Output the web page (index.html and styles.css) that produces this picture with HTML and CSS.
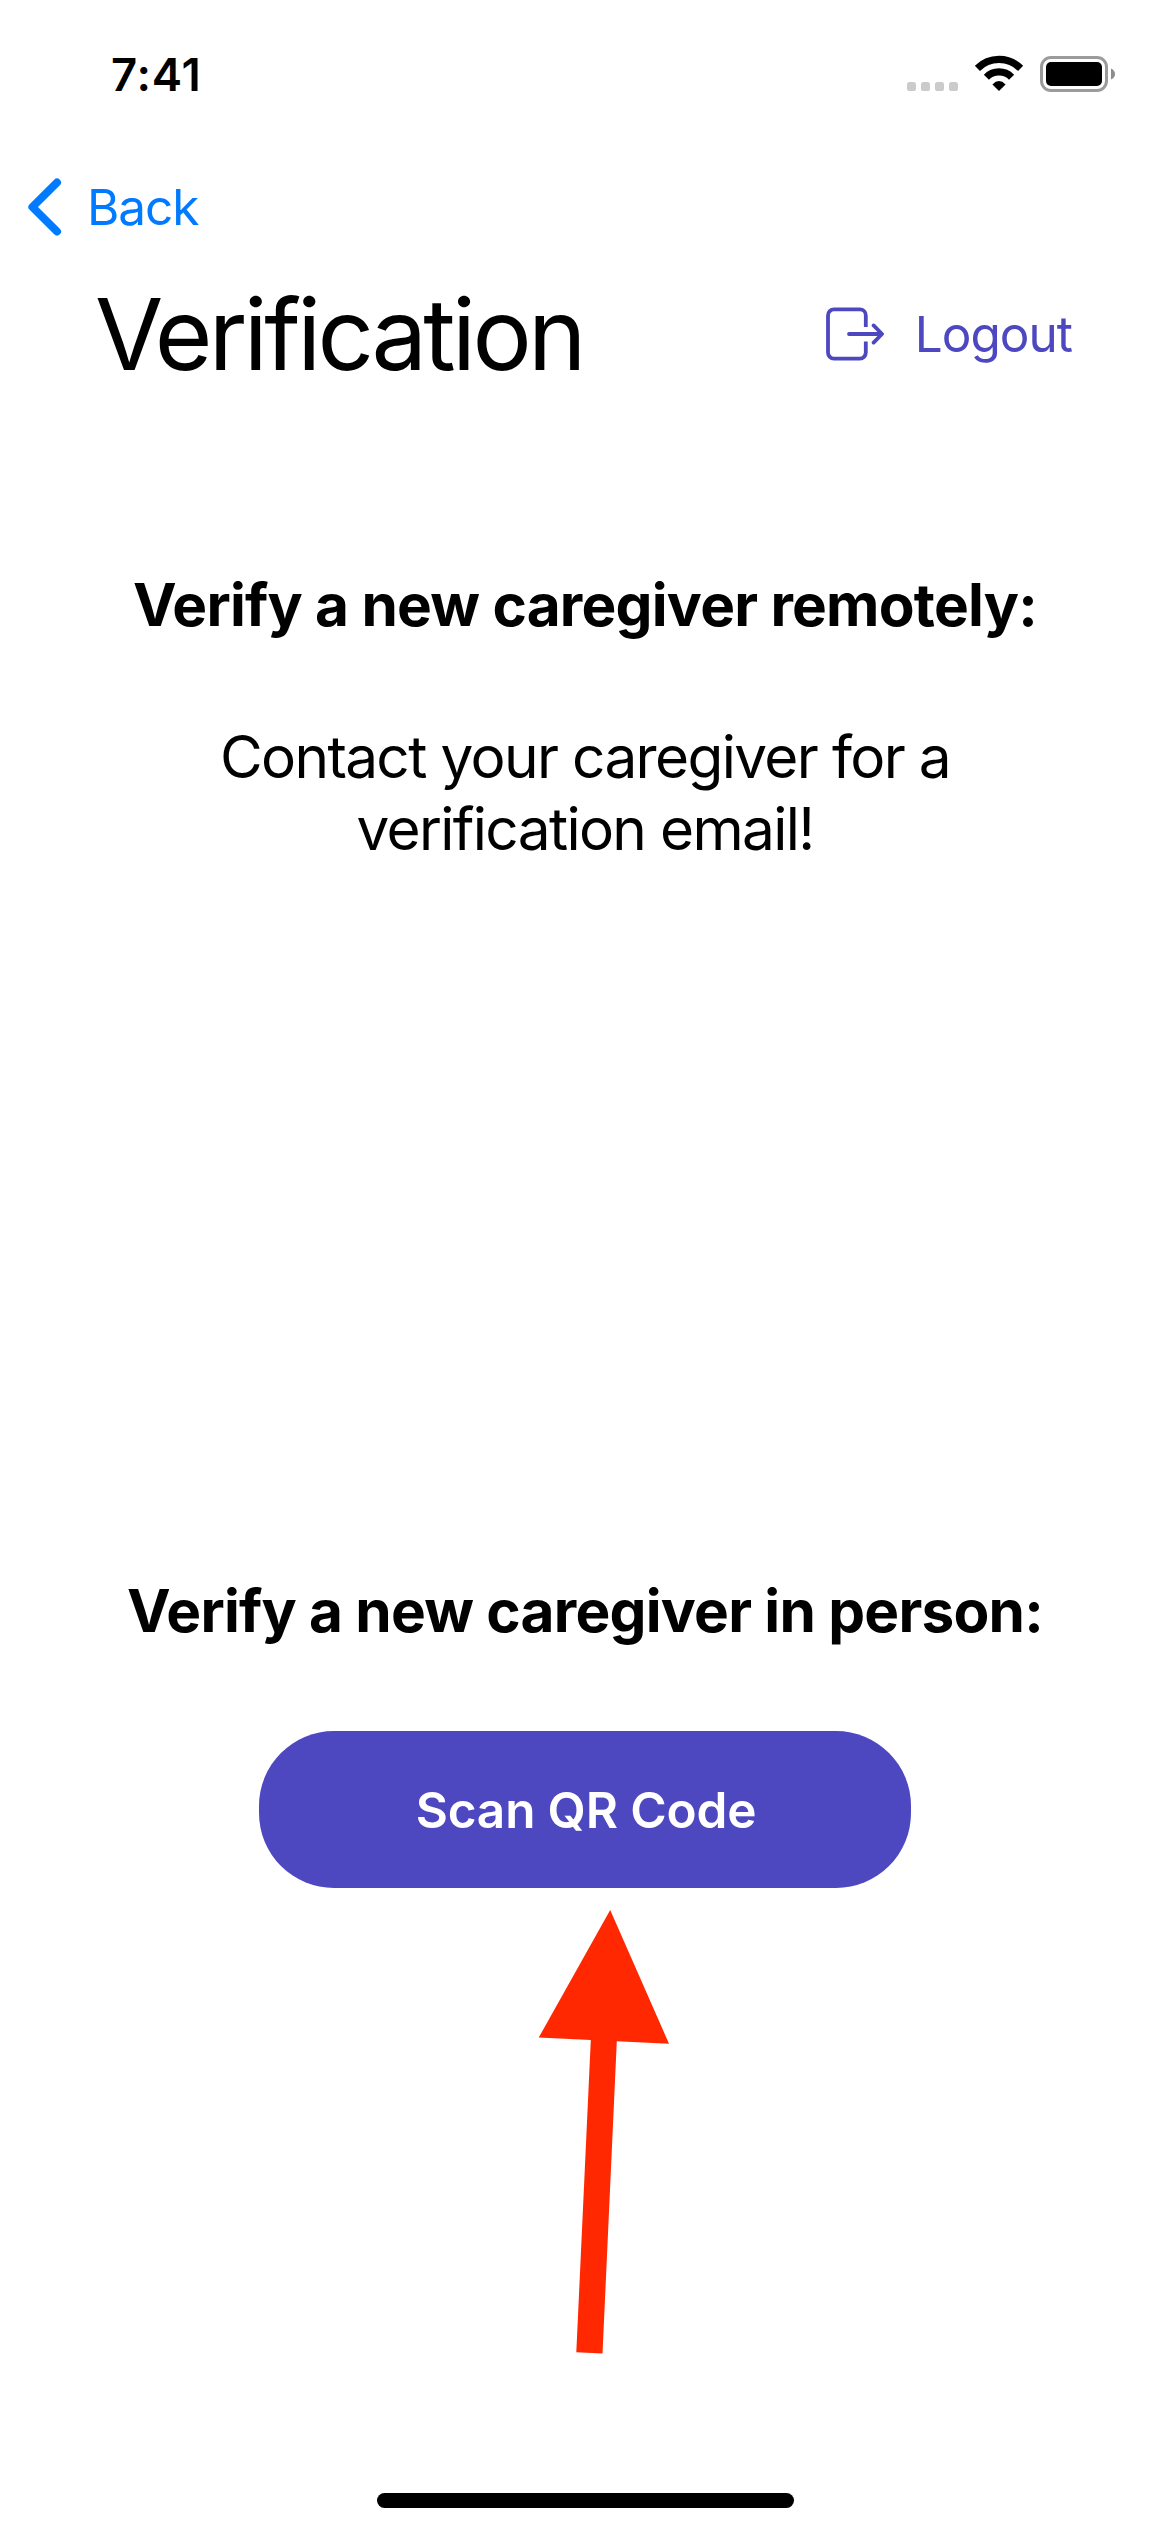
FILE: index.html
```html
<!DOCTYPE html>
<html lang="en">
<head>
<meta charset="utf-8">
<title>Verification</title>
<link rel="stylesheet" href="styles.css">
</head>
<body>
<div class="screen">
  <div class="status-bar">
    <span class="time">7:41</span>
    <svg class="status-icons" viewBox="0 0 210 40" width="210" height="40">
      <g fill="#cbcbcb">
        <rect x="0" y="29" width="9" height="9" rx="2.6"/>
        <rect x="14" y="29" width="9" height="9" rx="2.6"/>
        <rect x="28" y="29" width="9" height="9" rx="2.6"/>
        <rect x="42" y="29" width="9" height="9" rx="2.6"/>
      </g>
      <g fill="none" stroke="#000" stroke-width="7.2">
        <path d="M70.4 15.4A30.4 30.4 0 0 1 113.6 15.4"/>
        <path d="M79.4 24.2A17.8 17.8 0 0 1 104.6 24.2"/>
      </g>
      <path d="M85.4 31.4Q92 24.6 98.6 31.4L92 38Z"/>
      <rect x="134.5" y="4.5" width="65" height="33" rx="9.5" fill="none" stroke="#9b9b9b" stroke-width="3"/>
      <rect x="139" y="9" width="56" height="24" rx="5"/>
      <path d="M204 15.5Q208 17.5 208 21T204 26.5Z" fill="#8c8c8c"/>
    </svg>
  </div>

  <nav class="nav">
    <svg viewBox="0 0 34 58" width="34" height="58">
      <path d="M29 4.5L4.4 29L29 53.5" fill="none" stroke="#007aff" stroke-width="8" stroke-linecap="round" stroke-linejoin="round"/>
    </svg>
    <span class="back">Back</span>
  </nav>

  <header class="header">
    <h1 class="title">Verification</h1>
    <div class="logout">
      <svg viewBox="0 0 58 54" width="58" height="54">
        <g fill="none" stroke="#4d47c0" stroke-width="3.8">
          <path d="M39.8 20V8.4a6 6 0 0 0-6-6H8a6 6 0 0 0-6 6v37.2a6 6 0 0 0 6 6h25.8a6 6 0 0 0 6-6V34.6"/>
          <path d="M23 27H55.6M47.6 18.4L56 27L47.6 35.6" stroke-linecap="round" stroke-linejoin="round"/>
        </g>
      </svg>
      <span class="logout-label">Logout</span>
    </div>
  </header>

  <main class="content">
    <section class="remote">
      <h2 class="heading">Verify a new caregiver remotely:</h2>
      <p class="message">Contact your caregiver for a<br>verification email!</p>
    </section>
    <section class="in-person">
      <h2 class="heading">Verify a new caregiver in person:</h2>
      <button class="scan">Scan QR Code</button>
    </section>
  </main>

  <svg class="pointer" viewBox="0 0 132 444" width="132" height="444">
    <path d="M72.2 0L131 133.7L78.8 131.3L64.5 443.5L38.3 442.3L52.8 130L.7 127.6Z" fill="#ff2800"/>
  </svg>
  <div class="home-indicator"></div>
</div>
</body>
</html>
```
FILE: styles.css
```css
* { box-sizing: border-box; margin: 0; padding: 0; }
body { background: #fff; color: #000; font-family: Inter, "Liberation Sans", sans-serif; }
.screen { position: relative; width: 1170px; height: 2532px; display: flex; flex-direction: column; background: #fff; overflow: hidden; }
.status-bar { height: 141px; padding: 47px 53px 0 111px; display: flex; justify-content: space-between; align-items: flex-start; }
.time { font-size: 45.5px; line-height: 55px; font-weight: 600; letter-spacing: .8px; }
.status-icons { display: block; margin-top: 6px; }
.nav { height: 132px; padding-left: 28px; display: flex; align-items: center; gap: 25px; color: #007aff; }
.back { font-size: 49.5px; line-height: 60px; letter-spacing: -1.1px; }
.header { height: 122px; padding: 0 98px 0 95px; display: flex; align-items: center; justify-content: space-between; }
.title { font-size: 99px; line-height: 120px; font-weight: 400; letter-spacing: -3.65px; }
.logout { display: flex; align-items: center; gap: 31px; color: #4d47c0; }
.logout-label { font-size: 49.5px; line-height: 60px; letter-spacing: -1px; }
.content { display: flex; flex-direction: column; }
.remote { margin-top: 174px; height: 1006px; display: flex; flex-direction: column; gap: 80px; }
.heading, .message { font-size: 58.5px; line-height: 72px; text-align: center; }
.heading { font-weight: 700; letter-spacing: -.76px; }
.message { letter-spacing: -1.65px; }
.in-person { display: flex; flex-direction: column; align-items: center; gap: 84px; }
.scan { width: 652px; height: 157px; padding-left: 2px; border: 0; border-radius: 75px; background: #4d47c0; color: #fff; font-family: inherit; font-size: 49.5px; line-height: 60px; font-weight: 600; letter-spacing: -.15px; }
.pointer { position: absolute; left: 537.5px; top: 1910px; }
.home-indicator { width: 417px; height: 15px; margin: auto auto 24px; border-radius: 7.5px; background: #000; }
```
